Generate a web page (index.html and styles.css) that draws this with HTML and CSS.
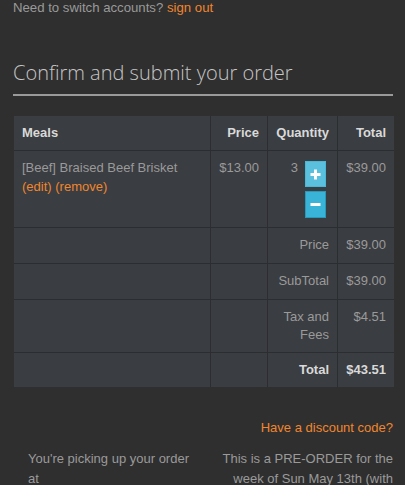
FILE: index.html
```html
<!DOCTYPE html>
<html>
<head>
<meta charset="utf-8">
<link rel="stylesheet" href="styles.css">
</head>
<body>
<div class="page">
  <p class="switch">Need to switch accounts? <a class="link" href="#">sign out</a></p>
  <h1 class="page-header">Confirm and submit your order</h1>
  <table class="order">
    <thead>
      <tr>
        <th class="c-meal">Meals</th>
        <th class="c-price num">Price</th>
        <th class="c-qty num">Quantity</th>
        <th class="c-total num">Total</th>
      </tr>
    </thead>
    <tbody>
      <tr class="meal-row">
        <td>[Beef] Braised Beef Brisket<br><a class="link" href="#">(edit)</a> <a class="link" href="#">(remove)</a></td>
        <td class="num">$13.00</td>
        <td class="num">
          <div class="qty">
            <span class="qty-val">3</span>
            <div class="qty-btns">
              <button class="btn btn-plus"><svg width="11" height="11" viewBox="0 0 11 11"><path d="M5.5 0.5v10M0.5 5.5h10" stroke="#fff" stroke-width="3"/></svg></button>
              <button class="btn btn-minus"><svg width="11" height="11" viewBox="0 0 11 11"><path d="M0.5 5.5h10" stroke="#fff" stroke-width="3"/></svg></button>
            </div>
          </div>
        </td>
        <td class="num">$39.00</td>
      </tr>
      <tr>
        <td></td><td></td>
        <td class="num">Price</td>
        <td class="num">$39.00</td>
      </tr>
      <tr>
        <td></td><td></td>
        <td class="num">SubTotal</td>
        <td class="num">$39.00</td>
      </tr>
      <tr class="tax">
        <td></td><td></td>
        <td class="num">Tax and<br>Fees</td>
        <td class="num">$4.51</td>
      </tr>
      <tr class="grand">
        <td></td><td></td>
        <td class="num">Total</td>
        <td class="num">$43.51</td>
      </tr>
    </tbody>
  </table>
  <p class="discount"><a class="link" href="#">Have a discount code?</a></p>
  <div class="info">
    <p class="info-left">You're picking up your order at</p>
    <p class="info-right">This is a PRE-ORDER for the week of Sun May 13th (with</p>
  </div>
</div>
</body>
</html>
```

FILE: styles.css
```css
html, body {
  margin: 0;
  padding: 0;
  background: #2f2f2f;
}
body {
  font-family: "Liberation Sans", Arial, sans-serif;
  font-size: 13px;
  line-height: 1.42857;
  color: #9a9a9a;
  overflow: hidden;
}
.page {
  padding: 0 12px 0 13px;
}
.link {
  color: #f0862e;
  text-decoration: none;
}
.switch {
  margin: -1px 0 0;
  font-size: 13.2px;
}
.page-header {
  font-family: "Open Sans", sans-serif;
  font-weight: 300;
  font-size: 20px;
  line-height: 22px;
  color: #c6c6c6;
  margin: 44px 0 20px;
  padding-bottom: 10px;
  border-bottom: 2px solid #9a9a9a;
}
.order {
  width: 380px;
  margin-left: 1px;
  border-collapse: collapse;
  background: #3a3d41;
}
.order th, .order td {
  padding: 8px;
  vertical-align: top;
  text-align: left;
  border: 1px solid #2c2d30;
}
.order tr:first-child th { border-top: 0; }
.order th:first-child, .order td:first-child { border-left: 0; }
.order th:last-child, .order td:last-child { border-right: 0; }
.order tr:last-child td { border-bottom: 0; }
.order th {
  color: #d9d9d9;
  font-weight: bold;
}
.c-meal { width: 180px; }
.c-price { width: 40px; }
.c-qty { width: 53px; }
.order .num { text-align: right; }
.meal-row td { padding-bottom: 9px; }
.tax td { line-height: 18px; }
.qty {
  display: flex;
  justify-content: flex-end;
  align-items: flex-start;
  gap: 7px;
  padding-right: 3px;
}
.qty-btns {
  display: flex;
  flex-direction: column;
  gap: 4px;
  padding-top: 2px;
}
.btn {
  width: 21px;
  height: 26px;
  padding: 0;
  margin: 0;
  display: flex;
  align-items: center;
  justify-content: center;
  border: 1px solid #46b8da;
  border-radius: 0;
}
.btn-plus { background: #5bc0de; }
.btn-minus { background: #39b3d7; border-color: #269abc; height: 27px; }
.grand td {
  color: #d9d9d9;
  font-weight: bold;
}
.discount {
  text-align: right;
  margin: 32px 0 0;
}
.info {
  display: grid;
  grid-template-columns: 190px 190px;
  margin-top: 11px;
}
.info p {
  margin: 0;
  font-size: 13px;
  line-height: 20px;
}
.info-left { padding-left: 15px; }
.info-right { padding-left: 15px; text-align: right; }
```
